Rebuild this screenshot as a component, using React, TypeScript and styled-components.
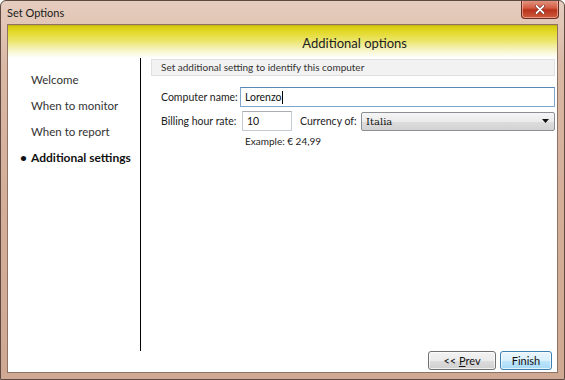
import * as React from "react";
import styled, { createGlobalStyle } from "styled-components";

const GlobalStyle = createGlobalStyle`
  html, body {
    margin: 0;
    padding: 0;
    background: #ffffff;
  }
  body {
    font-family: Lato, "Open Sans", sans-serif;
  }
`;

const Window = styled.div`
  width: 565px;
  height: 380px;
  box-sizing: border-box;
  display: flex;
  flex-direction: column;
  border: 1px solid #5e4a40;
  border-radius: 6px 6px 0 0;
  background: linear-gradient(180deg, #e6cdbf 0%, #d9b8a4 18%, #d2ad98 60%, #cfa994 100%);
  overflow: hidden;
`;

const TitleBar = styled.div`
  height: 23px;
  display: flex;
  align-items: center;
  justify-content: space-between;
  padding: 0 5px 0 6px;
  flex-shrink: 0;
`;

const Title = styled.span`
  font-size: 11px;
  color: #1a1a1a;
  margin-top: -1px;
`;

const CloseButton = styled.div`
  width: 36px;
  height: 18px;
  align-self: flex-start;
  margin-top: -1px;
  border: 1px solid #6b2a20;
  border-top: none;
  border-radius: 0 0 4px 4px;
  background: linear-gradient(180deg, #e49a86 0%, #d35a42 45%, #b8331c 55%, #cf5a3c 100%);
  display: flex;
  align-items: center;
  justify-content: center;
  box-shadow: inset 0 0 0 1px rgba(255, 220, 210, 0.5);
`;

const Client = styled.div`
  flex: 1;
  margin: 0 6px 6px 6px;
  background: #ffffff;
  border: 1px solid #8f7263;
  display: flex;
  flex-direction: column;
`;

const HeaderBand = styled.div`
  height: 32px;
  flex-shrink: 0;
  background: linear-gradient(180deg, #d6ca10 0%, #e3da2c 20%, #ece670 48%, #f8f6cc 78%, #ffffff 100%);
  border-top: 1px solid #c4b414;
  display: flex;
  align-items: center;
  justify-content: flex-end;
  padding-right: 150px;
`;

const HeaderText = styled.span`
  font-size: 13px;
  color: #222;
  margin-top: 1px;
`;

const Main = styled.div`
  flex: 1;
  display: flex;
`;

const Nav = styled.ul`
  width: 133px;
  margin: 0;
  padding: 9px 0 0 23px;
  box-sizing: border-box;
  list-style: none;
  border-right: 1px solid #000;
`;

const NavItem = styled.li<{ $active?: boolean }>`
  position: relative;
  height: 26px;
  line-height: 26px;
  font-size: ${(p) => (p.$active ? "12px" : "11.5px")};
  color: ${(p) => (p.$active ? "#111" : "#333")};
  font-weight: ${(p) => (p.$active ? 700 : 400)};
  white-space: nowrap;
  &::before {
    content: ${(p) => (p.$active ? '"•"' : '""')};
    position: absolute;
    left: -11px;
    font-weight: 700;
  }
`;

const Content = styled.div`
  flex: 1;
  padding: 1px 2px 0 10px;
`;

const InfoBox = styled.div`
  height: 15px;
  line-height: 15px;
  background: #f2f2f2;
  border: 1px solid #e0e0e0;
  padding-left: 9px;
  font-size: 10px;
  color: #333;
  white-space: nowrap;
`;

const Form = styled.div`
  padding: 11px 0 0 10px;
  display: flex;
  flex-direction: column;
  gap: 4px;
`;

const Row = styled.div`
  display: flex;
  align-items: center;
  height: 20px;
`;

const Label = styled.span<{ $w: number }>`
  width: ${(p) => p.$w}px;
  flex-shrink: 0;
  font-size: 10.5px;
  color: #222;
  white-space: nowrap;
`;

const TextBox = styled.div<{ $w?: number; $focus?: boolean }>`
  ${(p) => (p.$w ? `width: ${p.$w}px;` : "flex: 1;")}
  height: 20px;
  box-sizing: border-box;
  border: 1px solid ${(p) => (p.$focus ? "#7fa6cc" : "#c5cbd3")};
  border-top-color: ${(p) => (p.$focus ? "#5c86b4" : "#abadb3")};
  padding: 0 4px;
  font-size: 10.5px;
  line-height: 18px;
  color: #111;
  display: flex;
  align-items: center;
`;

const Caret = styled.span`
  display: inline-block;
  width: 1px;
  height: 13px;
  background: #000;
`;

const Select = styled.div`
  flex: 1;
  height: 19px;
  box-sizing: border-box;
  border: 1px solid #8c8f94;
  border-radius: 2px;
  background: linear-gradient(180deg, #f5f5f5 0%, #ebebeb 50%, #dddddd 51%, #d2d2d2 100%);
  display: flex;
  align-items: center;
  justify-content: space-between;
  padding: 0 5px 0 4px;
  font-family: "DejaVu Serif", "Liberation Serif", serif;
  font-size: 10px;
  color: #111;
`;

const Example = styled.div`
  padding-left: 84px;
  margin-top: 0;
  font-size: 10px;
  color: #222;
`;

const Footer = styled.div`
  height: 21px;
  display: flex;
  justify-content: flex-end;
  align-items: flex-start;
  gap: 4px;
  padding-right: 5px;
`;

const Button = styled.button<{ $default?: boolean }>`
  height: 19px;
  padding: 0;
  box-sizing: border-box;
  border: 1px solid ${(p) => (p.$default ? "#3c7fb1" : "#707070")};
  border-radius: 3px;
  background: ${(p) =>
    p.$default
      ? "linear-gradient(180deg, #eaf6fd 0%, #d9f0fc 50%, #bee6fd 51%, #a7d9f5 100%)"
      : "linear-gradient(180deg, #f2f2f2 0%, #ebebeb 50%, #dddddd 51%, #cfcfcf 100%)"};
  box-shadow: inset 0 0 0 1px rgba(255, 255, 255, 0.7);
  font-family: Lato, sans-serif;
  font-size: 11px;
  color: #111;
`;

export default function App() {
  return (
    <>
      <GlobalStyle />
      <Window>
        <TitleBar>
          <Title>Set Options</Title>
          <CloseButton>
            <svg width="10" height="9" viewBox="0 0 10 9">
              <path d="M1.5 1 L8.5 8 M8.5 1 L1.5 8" stroke="#5a1a10" strokeWidth="3" strokeLinecap="round" />
              <path d="M1.5 1 L8.5 8 M8.5 1 L1.5 8" stroke="#ffffff" strokeWidth="1.8" strokeLinecap="round" />
            </svg>
          </CloseButton>
        </TitleBar>
        <Client>
          <HeaderBand>
            <HeaderText>Additional options</HeaderText>
          </HeaderBand>
          <Main>
            <Nav>
              <NavItem>Welcome</NavItem>
              <NavItem>When to monitor</NavItem>
              <NavItem>When to report</NavItem>
              <NavItem $active>Additional settings</NavItem>
            </Nav>
            <Content>
              <InfoBox>Set additional setting to identify this computer</InfoBox>
              <Form>
                <Row>
                  <Label $w={79}>Computer name:</Label>
                  <TextBox $focus>
                    Lorenzo
                    <Caret />
                  </TextBox>
                </Row>
                <Row>
                  <Label $w={81}>Billing hour rate:</Label>
                  <TextBox $w={50}>10</TextBox>
                  <Label $w={61} style={{ marginLeft: 8 }}>
                    Currency of:
                  </Label>
                  <Select>
                    <span>Italia</span>
                    <svg width="7" height="4" viewBox="0 0 7 4">
                      <path d="M0 0 H7 L3.5 4 Z" fill="#111" />
                    </svg>
                  </Select>
                </Row>
                <Example>Example: € 24,99</Example>
              </Form>
            </Content>
          </Main>
          <Footer>
            <Button $default={false} style={{ width: 68 }}>
              {"<< "}
              <u>P</u>rev
            </Button>
            <Button $default style={{ width: 52 }}>
              Finish
            </Button>
          </Footer>
        </Client>
      </Window>
    </>
  );
}
